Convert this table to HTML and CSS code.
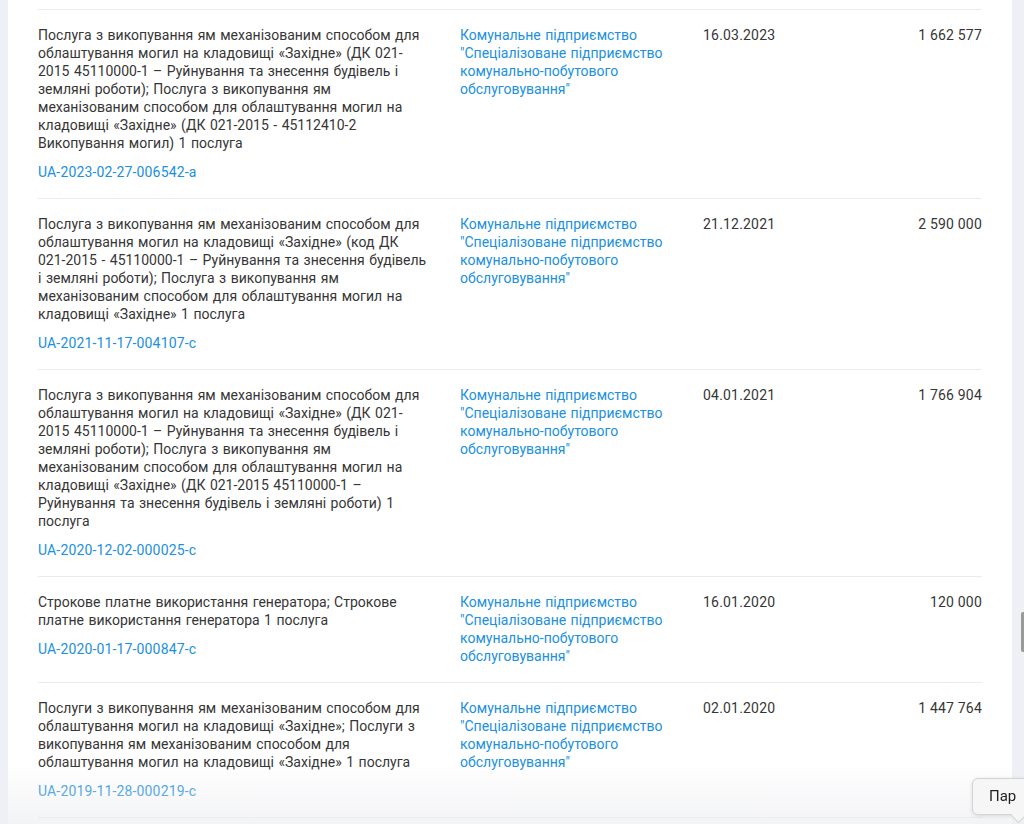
FILE: index.html
```html
<!DOCTYPE html>
<html lang="uk">
<head>
<meta charset="utf-8">
<title>Закупівлі</title>
<link rel="stylesheet" href="styles.css">
</head>
<body>
<div class="page">
  <div class="gutter-left"></div>
  <main class="panel">
    <div class="table">
      <div class="row">
        <div class="c-desc">
          <p class="desc">Послуга з викопування ям механізованим способом для облаштування могил на кладовищі «Західне» (ДК 021-2015 45110000-1 – Руйнування та знесення будівель і земляні роботи); Послуга з викопування ям механізованим способом для облаштування могил на кладовищі «Західне» (ДК 021-2015 - 45112410-2 Викопування могил) 1 послуга</p>
          <a class="id" href="#">UA-2023-02-27-006542-a</a>
        </div>
        <a class="c-org" href="#">Комунальне підприємство "Спеціалізоване підприємство комунально-побутового обслуговування"</a>
        <div class="c-date">16.03.2023</div>
        <div class="c-sum">1 662 577</div>
      </div>
      <div class="row">
        <div class="c-desc">
          <p class="desc">Послуга з викопування ям механізованим способом для облаштування могил на кладовищі «Західне» (код ДК 021-2015 - 45110000-1 – Руйнування та знесення будівель і земляні роботи); Послуга з викопування ям механізованим способом для облаштування могил на кладовищі «Західне» 1 послуга</p>
          <a class="id" href="#">UA-2021-11-17-004107-c</a>
        </div>
        <a class="c-org" href="#">Комунальне підприємство "Спеціалізоване підприємство комунально-побутового обслуговування"</a>
        <div class="c-date">21.12.2021</div>
        <div class="c-sum">2 590 000</div>
      </div>
      <div class="row">
        <div class="c-desc">
          <p class="desc">Послуга з викопування ям механізованим способом для облаштування могил на кладовищі «Західне» (ДК 021-2015 45110000-1 – Руйнування та знесення будівель і земляні роботи); Послуга з викопування ям механізованим способом для облаштування могил на кладовищі «Західне» (ДК 021-2015 45110000-1 – Руйнування та знесення будівель і земляні роботи) 1 послуга</p>
          <a class="id" href="#">UA-2020-12-02-000025-c</a>
        </div>
        <a class="c-org" href="#">Комунальне підприємство "Спеціалізоване підприємство комунально-побутового обслуговування"</a>
        <div class="c-date">04.01.2021</div>
        <div class="c-sum">1 766 904</div>
      </div>
      <div class="row">
        <div class="c-desc">
          <p class="desc">Строкове платне використання генератора; Строкове платне використання генератора 1 послуга</p>
          <a class="id" href="#">UA-2020-01-17-000847-c</a>
        </div>
        <a class="c-org" href="#">Комунальне підприємство "Спеціалізоване підприємство комунально-побутового обслуговування"</a>
        <div class="c-date">16.01.2020</div>
        <div class="c-sum">120 000</div>
      </div>
      <div class="row">
        <div class="c-desc">
          <p class="desc">Послуги з викопування ям механізованим способом для облаштування могил на кладовищі «Західне»; Послуги з викопування ям механізованим способом для облаштування могил на кладовищі «Західне» 1 послуга</p>
          <a class="id" href="#">UA-2019-11-28-000219-c</a>
        </div>
        <a class="c-org" href="#">Комунальне підприємство "Спеціалізоване підприємство комунально-побутового обслуговування"</a>
        <div class="c-date">02.01.2020</div>
        <div class="c-sum">1 447 764</div>
      </div>
      <div class="row row-last"></div>
    </div>
    <div class="fade"></div>
  </main>
  <div class="gutter-right"><div class="thumb"></div></div>
</div>
<div class="tooltip">Пар</div>
</body>
</html>
```
FILE: styles.css
```css
html, body {
  margin: 0;
  padding: 0;
  height: 100%;
  overflow: hidden;
}
body {
  font-family: Roboto, "Noto Sans", "Liberation Sans", sans-serif;
  font-size: 14px;
  line-height: 18px;
  word-spacing: 1px;
  color: #363636;
  background: #eff0f5;
}
.page {
  display: flex;
  height: 824px;
}
.gutter-left {
  width: 8px;
  flex: none;
  background: #eff0f5;
}
.panel {
  flex: 1;
  background: #ffffff;
  padding: 9px 30px 0 30px;
  position: relative;
  overflow: hidden;
}
.gutter-right {
  width: 12px;
  flex: none;
  background: #eff0f5;
  display: flex;
  justify-content: flex-end;
}
.thumb {
  width: 3px;
  height: 40px;
  margin-top: 612px;
  background: #9a9a9a;
  border-radius: 2px 0 0 2px;
}
.row {
  display: grid;
  grid-template-columns: 392px 213px 110px 1fr;
  column-gap: 30px;
  border-top: 1px solid #ebebeb;
  padding: 16px 0 17px;
}
.row-last {
  padding: 0;
}
.c-desc {
  display: flex;
  flex-direction: column;
  align-items: flex-start;
}
.desc {
  margin: 0;
}
.id, .c-org {
  color: #2090e0;
  text-decoration: none;
}
.id {
  margin-top: 11px;
  letter-spacing: 0.15px;
}
.c-date {
  letter-spacing: 0.2px;
}
.c-sum {
  text-align: right;
  word-spacing: 0;
  letter-spacing: 0.2px;
}
.fade {
  position: absolute;
  left: 0;
  right: 0;
  bottom: 0;
  height: 60px;
  background: linear-gradient(to bottom, rgba(235, 236, 240, 0), rgba(235, 236, 240, 0.6));
  pointer-events: none;
}
.tooltip {
  position: fixed;
  left: 972px;
  top: 778px;
  padding: 8px 30px 8px 16px;
  background: #f6f6f6;
  border: 1px solid #d4d4d4;
  border-radius: 6px;
  box-shadow: 0 1px 4px rgba(0, 0, 0, 0.12);
  font-size: 15px;
  line-height: 19px;
  word-spacing: 0;
  color: #222222;
}
.tooltip::after {
  content: "";
  position: absolute;
  left: 40px;
  bottom: -7px;
  width: 10px;
  height: 10px;
  background: #f6f6f6;
  border-right: 1px solid #d4d4d4;
  border-bottom: 1px solid #d4d4d4;
  transform: rotate(45deg);
}
```
